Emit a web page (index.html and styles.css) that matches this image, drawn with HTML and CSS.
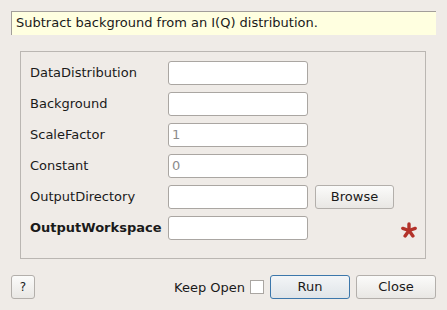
FILE: index.html
```html
<!DOCTYPE html>
<html>
<head>
<meta charset="utf-8">
<link rel="stylesheet" href="styles.css">
</head>
<body>
<div class="dialog">
  <div class="banner">Subtract background from an I(Q) distribution.</div>
  <div class="group">
    <div class="label">DataDistribution</div>
    <div class="input"></div>
    <div></div><div></div>
    <div class="label">Background</div>
    <div class="input"></div>
    <div></div><div></div>
    <div class="label">ScaleFactor</div>
    <div class="input"><span class="val">1</span></div>
    <div></div><div></div>
    <div class="label">Constant</div>
    <div class="input"><span class="val">0</span></div>
    <div></div><div></div>
    <div class="label">OutputDirectory</div>
    <div class="input"></div>
    <div class="btn">Browse</div><div></div>
    <div class="label bold">OutputWorkspace</div>
    <div class="input"></div>
    <div></div>
    <div class="star"><svg width="16" height="16" viewBox="0 0 16 16"><g stroke="#b3322a" stroke-width="3.4" stroke-linecap="round"><line x1="8" y1="8.5" x2="8" y2="2"/><line x1="8" y1="8.5" x2="14.2" y2="6.4"/><line x1="8" y1="8.5" x2="1.8" y2="6.4"/><line x1="8" y1="8.5" x2="11.9" y2="13.9"/><line x1="8" y1="8.5" x2="4.1" y2="13.9"/></g></svg></div>
  </div>
  <div class="footer">
    <div class="btn help">?</div>
    <div class="spacer"></div>
    <div class="keep">Keep Open <span class="check"></span></div>
    <div class="btn run">Run</div>
    <div class="btn close">Close</div>
  </div>
</div>
</body>
</html>
```
FILE: styles.css
```css
html, body {
  margin: 0;
  padding: 0;
  background: #efebe7;
  font-family: "DejaVu Sans", sans-serif;
  font-size: 13px;
  color: #1a1a1a;
}
.dialog {
  width: 447px;
  height: 310px;
  display: flex;
  flex-direction: column;
  padding: 11px 11px 0 11px;
  box-sizing: border-box;
}
.banner {
  height: 24px;
  box-sizing: border-box;
  background: #ffffe0;
  border-top: 1px solid #a29e9a;
  border-left: 1px solid #a29e9a;
  padding-left: 4px;
  line-height: 22px;
  width: 425px;
}
.group {
  margin: 16px 0 0 9px;
  width: 406px;
  height: 208px;
  box-sizing: border-box;
  border: 1px solid #bab6b2;
  padding: 9px 0 0 9px;
  display: grid;
  grid-template-columns: 131px 140px 79px 16px;
  grid-auto-rows: 24px;
  column-gap: 7px;
  row-gap: 7px;
  align-items: center;
}
.label {
  line-height: 24px;
}
.bold {
  font-weight: bold;
}
.input {
  height: 24px;
  box-sizing: border-box;
  background: #fff;
  border: 1px solid #aaa6a2;
  border-radius: 3px;
  padding-left: 3px;
  line-height: 22px;
}
.val {
  color: #8c8c8c;
}
.btn {
  height: 24px;
  box-sizing: border-box;
  border: 1px solid #b3afab;
  border-radius: 3px;
  background: linear-gradient(#fbfbfa, #e9e7e4);
  text-align: center;
  line-height: 22px;
}
.star {
  height: 16px;
  margin-top: 3px;
}
.star svg {
  display: block;
}
.footer {
  margin-top: 16px;
  display: flex;
  align-items: center;
  height: 24px;
}
.help {
  width: 24px;
  font-size: 12px;
}
.spacer {
  flex: 1;
}
.keep {
  display: flex;
  align-items: center;
  margin-right: 6px;
}
.check {
  display: inline-block;
  width: 14px;
  height: 14px;
  box-sizing: border-box;
  border: 1px solid #aaa6a2;
  background: #fff;
  margin-left: 5px;
}
.run {
  width: 80px;
  border-color: #3c77ab;
  background: linear-gradient(#f3f5f7, #dfe4e8);
  margin-right: 6px;
}
.close {
  width: 80px;
}
```
